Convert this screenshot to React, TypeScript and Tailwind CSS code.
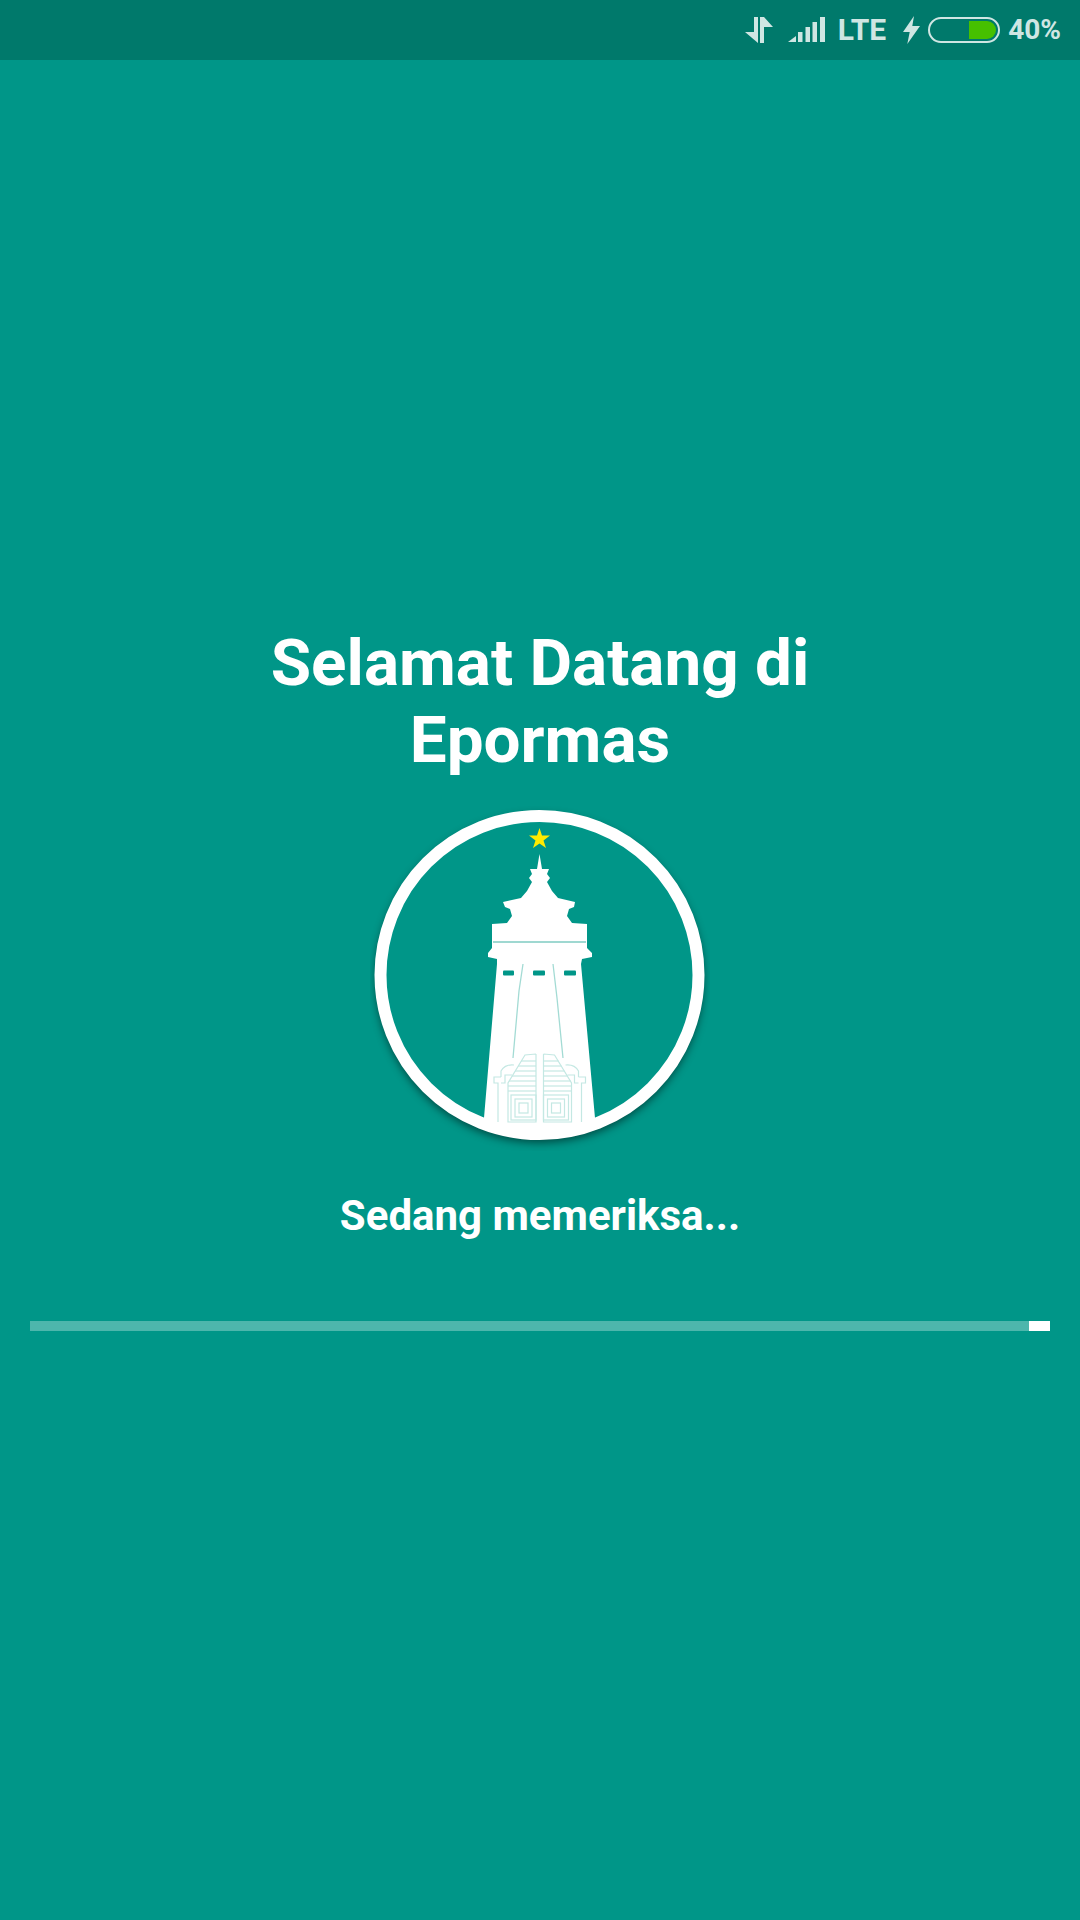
export default function App() {
  return (
    <div className="w-[1080px] h-[1920px] bg-[#009688] flex flex-col font-['Roboto',sans-serif] text-white overflow-hidden">
      <StatusBar />

      {/* Splash content */}
      <main className="flex flex-col items-center pt-[564px]">
        <h1 className="w-[640px] text-center text-[65.6px] leading-[77px] font-bold">Selamat Datang di Epormas</h1>
        <Logo />
        <p className="mt-[37px] text-[42px] leading-[56px] font-bold">Sedang memeriksa...</p>
        <div className="mt-[77px] w-[1020px] h-[10px] bg-[#4db6ac] flex justify-end">
          <div className="w-[21px] h-full bg-white" />
        </div>
      </main>
    </div>
  );
}

function StatusBar() {
  return (
    <div className="h-[60px] shrink-0 bg-[#00796b] flex items-center justify-end pr-[19px] text-[#cfe6e3] font-bold">
      {/* data arrows */}
      <svg width="28" height="28" viewBox="0 0 28 28" fill="currentColor">
        <polygon points="9,1 13,1 13,27 0,16 9,16" />
        <polygon points="15,1 19,1 28,11 19,11 19,27 15,27" />
      </svg>
      {/* signal */}
      <svg className="ml-[15px]" width="37" height="26" viewBox="0 0 37 26" fill="currentColor">
        <polygon points="0,25 8,19 8,25" />
        <rect x="10" y="15" width="4.5" height="10" />
        <rect x="17.5" y="10" width="4.5" height="15" />
        <rect x="24.5" y="5" width="4.5" height="20" />
        <rect x="32" y="0" width="5" height="25" />
      </svg>
      <span className="ml-[13px] text-[30px] leading-none">LTE</span>
      {/* charging bolt */}
      <svg className="ml-[17px]" width="17" height="28" viewBox="0 0 17 28" fill="currentColor">
        <polygon points="11,0 0,16 6.7,16 4.3,28 17,10 9.3,10" />
      </svg>
      {/* battery */}
      <div className="ml-[8px] w-[72px] h-[26px] rounded-[13px] border-2 border-[#cfe6e3] flex justify-end items-center pr-[2px]">
        <div className="w-[27px] h-[18px] bg-[#46c000] rounded-r-[9px]" />
      </div>
      <span className="ml-[8px] text-[28px] leading-none">40%</span>
    </div>
  );
}

function Logo() {
  const gateLine = "#c4e8e3";
  const gateHalf = (
    <g fill="none" stroke={gateLine} strokeWidth="1.2">
      <polyline points="536,1053 525,1054 508,1082 508,1121 536,1121 536,1053" />
      <line x1="521" y1="1060" x2="536" y2="1060" />
      <line x1="518" y1="1065" x2="536" y2="1065" />
      <line x1="515" y1="1070" x2="536" y2="1070" />
      <line x1="512" y1="1075" x2="536" y2="1075" />
      <line x1="509" y1="1080" x2="536" y2="1080" />
      <line x1="508" y1="1085" x2="536" y2="1085" />
      <line x1="508" y1="1090" x2="536" y2="1090" />
      <rect x="511" y="1094" width="25" height="25" />
      <rect x="515" y="1098" width="17" height="18" />
      <rect x="519" y="1102" width="9" height="10" />
      <path d="M498,1121 V1082 H494 V1076 H501 M501,1076 V1070 Q505,1063 514,1064 M501,1082 H505 V1074 H512" />
    </g>
  );

  return (
    <svg className="mt-[28px]" width="340" height="345" viewBox="370 805 340 345">
      <defs>
        <filter id="ringShadow" x="-10%" y="-10%" width="120%" height="125%">
          <feGaussianBlur stdDeviation="4" />
        </filter>
        <filter id="soften" x="-5%" y="-5%" width="110%" height="110%">
          <feGaussianBlur stdDeviation="0.7" />
        </filter>
        {/* shadow only falls outside the ring */}
        <mask id="outsideRing" maskUnits="userSpaceOnUse" x="370" y="805" width="340" height="345">
          <rect x="370" y="805" width="340" height="345" fill="#fff" />
          <circle cx="539.5" cy="974" r="155" fill="#000" />
        </mask>
      </defs>

      <g mask="url(#outsideRing)">
        <circle cx="539.5" cy="978" r="164" fill="#000" fillOpacity="0.5" filter="url(#ringShadow)" />
      </g>

      <g filter="url(#soften)">
        {/* tower */}
        <polygon
          fill="#fff"
          points="539.5,853 542,868 549,868 547,873 550,877 547,881 552,890 558,897 575,901 574,906 569,908 567,915 572,922 587,923 587,947 592,952 592,956 582,958 581,963 595,1117 595,1125 540,1134 484,1125 484,1117 497,963 497,958 488,956 488,952 492,947 492,923 507,922 512,915 510,908 505,906 503,901 521,897 527,890 532,881 529,877 532,873 530,868 537,868"
        />
        <line x1="493" y1="941" x2="586" y2="941" stroke="#7fcbc2" strokeWidth="1.5" />
        <rect x="503" y="969.5" width="11" height="5" rx="1" fill="#009688" />
        <rect x="533" y="969.5" width="12" height="5" rx="1" fill="#009688" />
        <rect x="564" y="969.5" width="12" height="5" rx="1" fill="#009688" />
        <polyline points="523,963 519,990 513,1057" fill="none" stroke="#a3dbd4" strokeWidth="1.3" />
        <polyline points="553,963 557,997 563,1057" fill="none" stroke="#a3dbd4" strokeWidth="1.3" />

        {/* gate */}
        {gateHalf}
        <g transform="matrix(-1 0 0 1 1079.5 0)">{gateHalf}</g>

        {/* ring */}
        <circle cx="539.5" cy="974" r="159" fill="none" stroke="#fff" strokeWidth="12" />

        {/* star */}
        <polygon
          fill="#ffeb00"
          points="539.5,827 542,834.5 550,834.5 543.5,839.5 546,847 539.5,842.5 533,847 535.5,839.5 529,834.5 537,834.5"
        />
      </g>
    </svg>
  );
}
